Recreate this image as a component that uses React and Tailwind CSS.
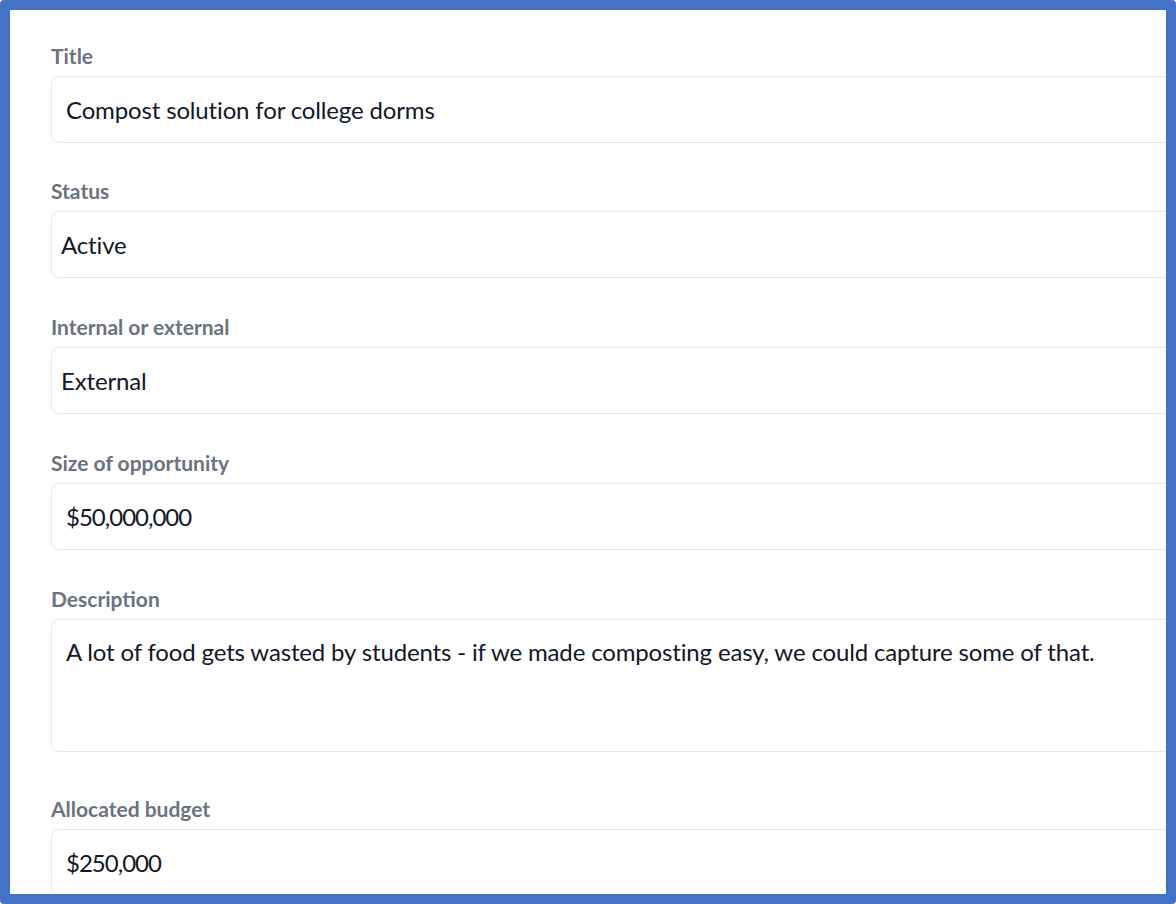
import React from "react";

const font = { fontFamily: "Lato, 'Noto Sans', sans-serif" };

function Label({ children }) {
  return (
    <div className="h-[28px] leading-[28px] mb-[6px] text-[21px] font-bold text-[#6b7280]">
      {children}
    </div>
  );
}

function Field({ label, value, pad = "pl-[14px]", track = "tracking-[-0.15px]", className = "" }) {
  return (
    <div className={className}>
      <Label>{label}</Label>
      <div
        className={`h-[67px] w-[1200px] rounded-[8px] border border-[#e5e7eb] bg-white flex items-center ${pad} ${track} text-[24px] text-[#111827]`}
      >
        {value}
      </div>
    </div>
  );
}

export default function App() {
  return (
    <div style={font} className="w-[1176px] h-[904px] bg-[#4472c4] p-[10px] rounded-[4px]">
      <div className="w-full h-full bg-white overflow-hidden pl-[41px] pt-[32px]">
        <div className="flex flex-col">
          <Field label="Title" value="Compost solution for college dorms" className="mb-[34px]" />
          <Field label="Status" value="Active" pad="pl-[9px]" className="mb-[35px]" />
          <Field label="Internal or external" value="External" pad="pl-[9px]" className="mb-[35px]" />
          <Field label="Size of opportunity" value="$50,000,000" track="tracking-[-1px]" className="mb-[35px]" />
          <div className="mb-[43px]">
            <Label>Description</Label>
            <div className="h-[133px] w-[1200px] rounded-[8px] border border-[#e5e7eb] bg-white pl-[14px] pt-[15px] text-[24px] tracking-[-0.15px] leading-[34px] text-[#111827]">
              A lot of food gets wasted by students - if we made composting easy, we could capture some of that.
            </div>
          </div>
          <Field label="Allocated budget" value="$250,000" track="tracking-[-1px]" />
        </div>
      </div>
    </div>
  );
}
